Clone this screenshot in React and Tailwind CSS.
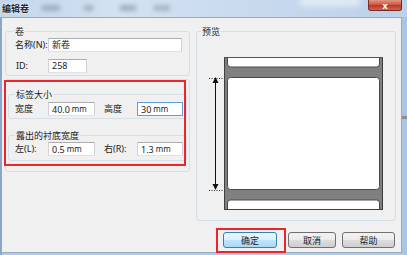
import React from "react";

function Input({ w, value, unit, focused }) {
  return (
    <div
      className={
        "h-[14px] bg-white border flex items-center pl-[3px] text-[9px] leading-none " +
        (focused
          ? "border-[#5b9fe0]"
          : "border-t-[#abadb3] border-l-[#cfd3d8] border-r-[#cfd3d8] border-b-[#dfe3e8]")
      }
      style={{ width: w }}
    >
      <span>{value}</span>
      {unit && <span className="ml-[2px] text-[8px]">{unit}</span>}
    </div>
  );
}

function Button({ children, primary }) {
  return (
    <div
      className={
        "h-[16px] rounded-[3px] border flex items-center justify-center text-[9px] leading-none " +
        (primary
          ? "border-[#3c7fb1] bg-[linear-gradient(#eaf6fd_0%,#d9f0fc_50%,#bee6fd_50%,#a7d9f5_100%)]"
          : "border-[#707070] bg-[linear-gradient(#f2f2f2_0%,#ebebeb_50%,#dddddd_50%,#cfcfcf_100%)]")
      }
    >
      {children}
    </div>
  );
}

function Legend({ children, className = "" }) {
  return (
    <span
      className={
        "absolute top-[-6px] px-[1px] bg-[#f0f0f0] text-[9px] leading-[11px] " + className
      }
    >
      {children}
    </span>
  );
}

export default function App() {
  return (
    <div className="relative w-[407px] h-[255px] overflow-hidden bg-[#b2c9e4] font-['Noto_Sans','Noto_Sans_CJK_SC',sans-serif] text-[#1b1b1b]">
      {/* title bar */}
      <div className="relative h-[17px] flex items-start justify-between overflow-hidden bg-[linear-gradient(90deg,#c3d6ec_0%,#d3e1f1_30%,#c9daee_60%,#bcd1ea_100%)]">
        <span className="absolute left-[42px] top-[5px] w-[18px] h-[6px] bg-[#9fb0c4] blur-[2px]" />
        <span className="absolute left-[84px] top-[5px] w-[9px] h-[6px] bg-[#a3b4c7] blur-[2px]" />
        <span className="absolute left-[120px] top-[5px] w-[16px] h-[6px] bg-[#9fb0c4] blur-[2px]" />
        <span className="absolute left-[154px] top-[5px] w-[16px] h-[6px] bg-[#a7b7ca] blur-[2px]" />
        <span className="absolute left-[300px] top-[-4px] w-[60px] h-[10px] bg-[#e2ecf7] blur-[3px]" />
        <span className="relative pl-[2px] pt-[3px] text-[9px] leading-[11px] font-bold text-[#2a2a2a] [text-shadow:0_0_3px_#ffffff]">
          编辑卷
        </span>
        <div className="relative mr-[5px] w-[34px] h-[11px] rounded-b-[3px] border border-t-0 border-[#7a2a1e] bg-[linear-gradient(#e39686_0%,#cc5a45_45%,#b73a27_55%,#cf6650_100%)] flex items-center justify-center text-white text-[9px] font-bold leading-none">
          x
        </div>
      </div>

      {/* body */}
      <div className="flex h-[238px]">
        <div className="w-[2px] bg-[#8aa6c9]" />
        <div className="w-[400px] h-[236px] bg-[#f0f0f0] border-t border-b border-r border-[#9aabbd] flex flex-col">
          <div className="flex gap-[6px] pl-[3px] pt-[13px]">
            {/* left column */}
            <div className="w-[185px] flex flex-col">
              <div className="relative h-[45px] border border-[#d5dfe5] rounded-[3px] pt-[5px]">
                <Legend className="left-[8px]">卷</Legend>
                <div className="flex items-center h-[15px] pl-[9px]">
                  <span className="w-[33px] text-[9px]">名称(N):</span>
                  <Input w={134} value="新卷" />
                </div>
                <div className="flex items-center h-[15px] pl-[10px] mt-[6px]">
                  <span className="w-[32px] text-[9px]">ID:</span>
                  <Input w={39} value="258" />
                </div>
              </div>

              <div className="relative mt-[3px] h-[93px] border border-[#d5dfe5] rounded-[3px] pl-[2px] pt-[14px]">
                <div className="relative w-[179px] h-[25px] border border-[#d5dfe5] rounded-[3px] pt-[7px] pl-[6px]">
                  <Legend className="left-[6px]">标签大小</Legend>
                  <div className="flex items-center h-[14px]">
                    <span className="w-[33px] text-[9px]">宽度</span>
                    <Input w={47} value="40.0" unit="mm" />
                    <span className="w-[33px] ml-[9px] text-[9px]">高度</span>
                    <Input w={46} value="30" unit="mm" focused />
                  </div>
                </div>
                <div className="relative mt-[16px] w-[179px] h-[26px] border border-[#d5dfe5] rounded-[3px] pt-[6px] pl-[6px]">
                  <Legend className="left-[6px]">露出的衬底宽度</Legend>
                  <div className="flex items-center h-[14px]">
                    <span className="w-[33px] text-[9px]">左(L):</span>
                    <Input w={47} value="0.5" unit="mm" />
                    <span className="w-[33px] ml-[9px] text-[9px]">右(R):</span>
                    <Input w={46} value="1.3" unit="mm" />
                  </div>
                </div>
                {/* red annotation */}
                <div className="absolute left-[-2px] top-[0px] w-[182px] h-[86px] border-2 border-[#e8282c]" />
              </div>
            </div>

            {/* right column */}
            <div className="relative w-[200px] h-[190px] border border-[#d5dfe5] rounded-[3px] pl-[8px] pt-[23px]">
              <Legend className="left-[4px]">预览</Legend>
              <svg width="185" height="160" viewBox="205 55 185 160" className="block">
                <rect x="224" y="57" width="159" height="153" fill="#808080" />
                <line x1="224.5" y1="57" x2="224.5" y2="210" stroke="#3f3f3f" />
                <line x1="382.5" y1="57" x2="382.5" y2="210" stroke="#3f3f3f" />
                <path d="M227.5 57.5 H379.5 V64 Q379.5 67 376.5 67 H230.5 Q227.5 67 227.5 64 Z" fill="#fff" stroke="#4a4a4a" />
                <line x1="224" y1="57.5" x2="383" y2="57.5" stroke="#555" />
                <rect x="227.5" y="77.5" width="152" height="112" rx="3" fill="#fff" stroke="#4a4a4a" />
                <path d="M227.5 209.5 V203 Q227.5 200 230.5 200 H376.5 Q379.5 200 379.5 203 V209.5 Z" fill="#fff" stroke="#4a4a4a" />
                <line x1="224" y1="209.5" x2="383" y2="209.5" stroke="#3f3f3f" />
                <line x1="215.5" y1="82" x2="215.5" y2="186" stroke="#111" />
                <polygon points="215.5,77 212.5,83 218.5,83" fill="#111" />
                <polygon points="215.5,190 212.5,184 218.5,184" fill="#111" />
                <line x1="209" y1="78.5" x2="224" y2="78.5" stroke="#222" strokeDasharray="1 1.5" />
                <line x1="209" y1="190.5" x2="224" y2="190.5" stroke="#222" strokeDasharray="1 1.5" />
              </svg>
            </div>
          </div>

          {/* buttons */}
          <div className="flex justify-end pr-[6px] mt-[11px]">
            <div className="relative w-[54px]">
              <Button primary>确定</Button>
              <div className="absolute left-[-7px] right-[-9px] top-[-4px] bottom-[-5px] border-2 border-[#e8282c]" />
            </div>
            <div className="w-[48px] ml-[11px]">
              <Button>取消</Button>
            </div>
            <div className="w-[53px] ml-[6px]">
              <Button>帮助</Button>
            </div>
          </div>
        </div>
        <div className="flex-1 flex flex-col bg-[#aac4e2]">
          <div className="h-[99px]" />
          <div className="h-[3px] bg-[#8a8f96]" />
        </div>
      </div>
    </div>
  );
}
